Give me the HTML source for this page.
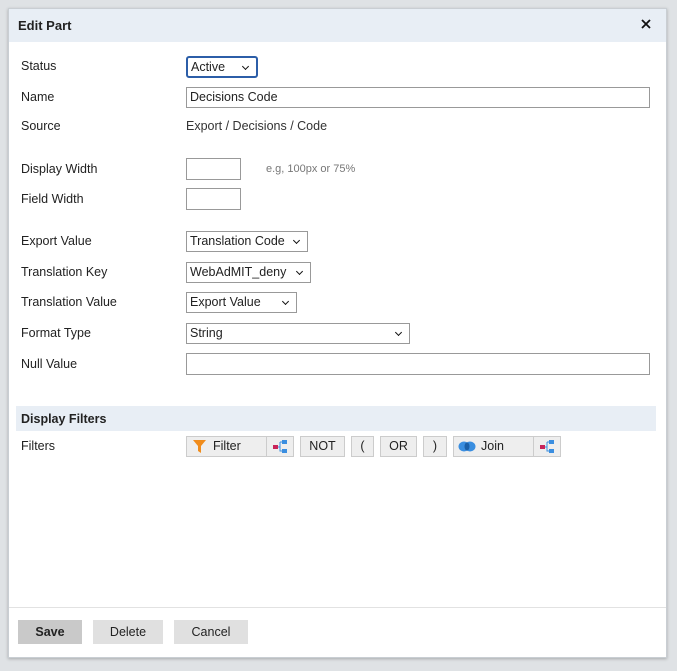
<!DOCTYPE html>
<html><head><style>
*{box-sizing:border-box;margin:0;padding:0}
body{width:677px;height:671px;background:#dfe2e5;font-family:"Liberation Sans",sans-serif;font-size:12px;color:#222;position:relative;overflow:hidden}
.dlg{position:absolute;left:8px;top:8px;width:659px;height:650px;background:#fff;border:1px solid #c9ced3;box-shadow:0 1px 3px rgba(0,0,0,.25)}
.a{position:absolute}
.lbl{position:absolute;left:21px;line-height:14px;font-size:12.5px}
.box{position:absolute;border:1px solid #999;background:#fff;padding-left:3px;line-height:19px;font-size:12.5px}
.sel:after{content:"";position:absolute;right:8px;top:6px;width:4px;height:4px;border-right:1.6px solid #111;border-bottom:1.6px solid #111;transform:rotate(45deg)}
.btn{position:absolute;top:436px;height:21px;background:#eee;border:1px solid #ccc;text-align:center;line-height:19px;font-size:12.5px}
.fb{position:absolute;top:620px;height:24px;line-height:24px;text-align:center;font-size:12.5px;font-family:"Liberation Sans",sans-serif}
</style></head><body>
<div class="dlg"></div>
<div class="a" style="left:9px;top:9px;width:657px;height:33px;background:#e8eef5"></div>
<div class="a" style="left:18px;top:18px;font-weight:bold;font-size:13px">Edit Part</div>
<svg class="a" style="left:641px;top:19px" width="10" height="10"><path d="M1 1L9 9M9 1L1 9" stroke="#111" stroke-width="1.8"/></svg>

<div class="lbl" style="top:59px">Status</div>
<div class="box sel" style="left:186px;top:56px;width:72px;height:22px;border:2px solid #2c5ea8;border-radius:3px;line-height:18px">Active</div>
<div class="lbl" style="top:90px">Name</div>
<div class="box" style="left:186px;top:87px;width:464px;height:21px">Decisions Code</div>
<div class="lbl" style="top:119px">Source</div>
<div class="a" style="left:186px;top:119px;color:#333;font-size:12.5px">Export / Decisions / Code</div>

<div class="lbl" style="top:162px">Display Width</div>
<div class="box" style="left:186px;top:158px;width:55px;height:22px"></div>
<div class="a" style="left:266px;top:163px;font-size:11px;color:#777">e.g, 100px or 75%</div>
<div class="lbl" style="top:192px">Field Width</div>
<div class="box" style="left:186px;top:188px;width:55px;height:22px"></div>

<div class="lbl" style="top:234px">Export Value</div>
<div class="box sel" style="left:186px;top:231px;width:122px;height:21px">Translation Code</div>
<div class="lbl" style="top:265px">Translation Key</div>
<div class="box sel" style="left:186px;top:262px;width:125px;height:21px">WebAdMIT_deny</div>
<div class="lbl" style="top:295px">Translation Value</div>
<div class="box sel" style="left:186px;top:292px;width:111px;height:21px">Export Value</div>
<div class="lbl" style="top:326px">Format Type</div>
<div class="box sel" style="left:186px;top:323px;width:224px;height:21px">String</div>
<div class="lbl" style="top:357px">Null Value</div>
<div class="box" style="left:186px;top:353px;width:464px;height:22px"></div>

<div class="a" style="left:16px;top:406px;width:640px;height:25px;background:#e8eef5"></div>
<div class="a" style="left:21px;top:412px;font-weight:bold;font-size:12.5px">Display Filters</div>
<div class="lbl" style="top:439px">Filters</div>

<div class="btn" style="left:186px;width:81px;text-align:left;padding-left:26px">Filter</div>
<svg class="a" style="left:193px;top:440px" width="13" height="13" viewBox="0 0 13 13"><path d="M0 0H13L8 6V13L5 11V6Z" fill="#f08c1c"/></svg>
<div class="btn" style="left:266px;width:28px"></div>
<svg class="a" style="left:273px;top:440px" width="14" height="13"><rect x="0" y="5" width="5" height="4" fill="#c8245a"/><rect x="9" y="0" width="5" height="4" fill="#3a8ee0"/><rect x="9" y="9" width="5" height="4" fill="#3a8ee0"/><path d="M5 7H7M7 2V11H9M7 2H9" stroke="#3a8ee0" fill="none"/></svg>
<div class="btn" style="left:300px;width:45px">NOT</div>
<div class="btn" style="left:351px;width:23px">(</div>
<div class="btn" style="left:380px;width:37px">OR</div>
<div class="btn" style="left:423px;width:24px">)</div>
<div class="btn" style="left:453px;width:81px;text-align:left;padding-left:27px">Join</div>
<svg class="a" style="left:458px;top:441px" width="18" height="11"><ellipse cx="6" cy="5.5" rx="5.5" ry="5" fill="#3a8ee0"/><ellipse cx="12" cy="5.5" rx="5.5" ry="5" fill="#3a8ee0"/><ellipse cx="9" cy="5.5" rx="2.5" ry="4" fill="#1a5fa8"/></svg>
<div class="btn" style="left:533px;width:28px"></div>
<svg class="a" style="left:540px;top:440px" width="14" height="13"><rect x="0" y="5" width="5" height="4" fill="#c8245a"/><rect x="9" y="0" width="5" height="4" fill="#3a8ee0"/><rect x="9" y="9" width="5" height="4" fill="#3a8ee0"/><path d="M5 7H7M7 2V11H9M7 2H9" stroke="#3a8ee0" fill="none"/></svg>

<div class="a" style="left:9px;top:607px;width:657px;height:1px;background:#e2e2e2"></div>
<div class="fb" style="left:18px;width:64px;background:#c9c9c9;font-weight:bold">Save</div>
<div class="fb" style="left:93px;width:70px;background:#e0e0e0">Delete</div>
<div class="fb" style="left:174px;width:74px;background:#e0e0e0">Cancel</div>
</body></html>
